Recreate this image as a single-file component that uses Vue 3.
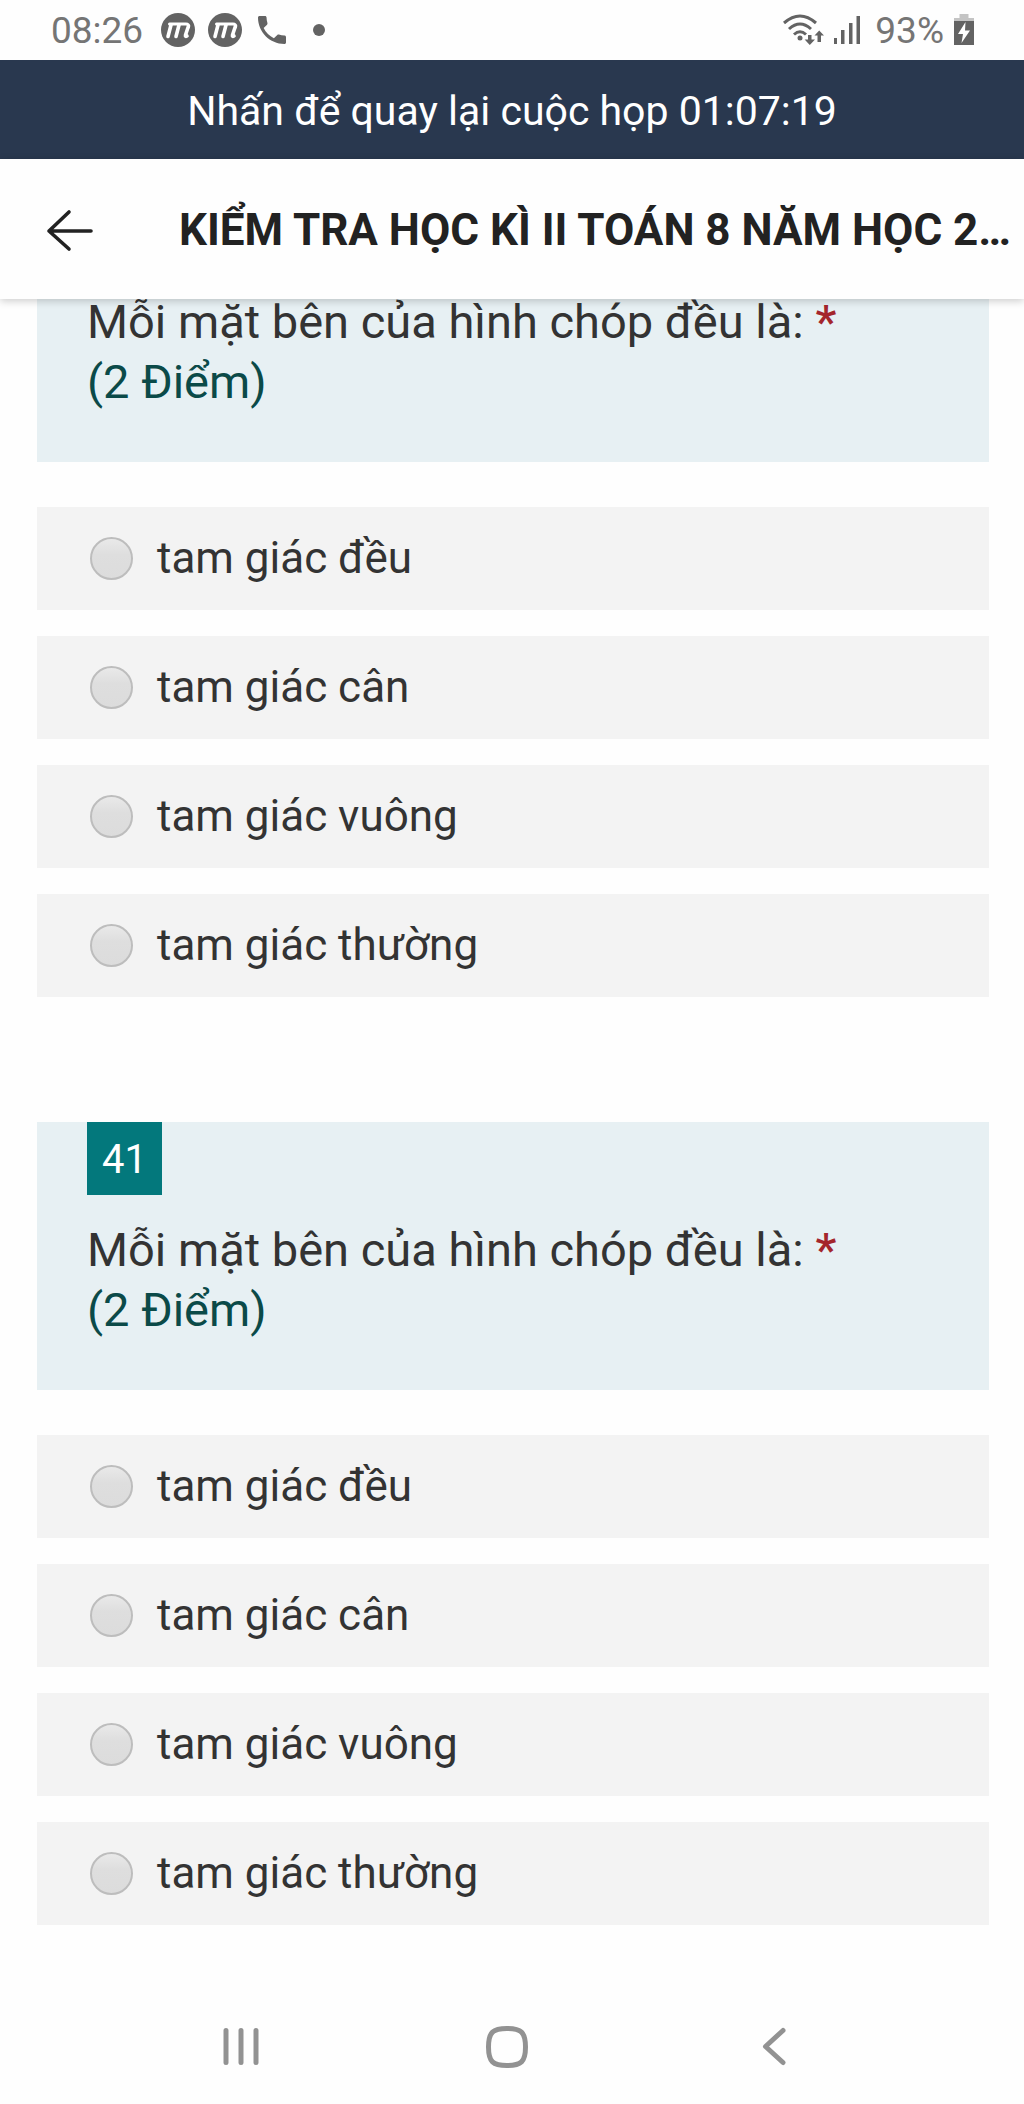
<script setup>
import { ref } from 'vue'

const choices = ['tam giác đều', 'tam giác cân', 'tam giác vuông', 'tam giác thường']
const questions = ref([
  { id: 'q40', number: '', title: 'Mỗi mặt bên của hình chóp đều là:', points: '(2 Điểm)', answer: null },
  { id: 'q41', number: '41', title: 'Mỗi mặt bên của hình chóp đều là:', points: '(2 Điểm)', answer: null },
])
</script>

<template>
  <div class="screen">
    <div class="status">
      <div class="status-side">
        <span class="status-text">08:26</span>
        <div class="notices">
          <svg v-for="n in 2" :key="n" width="36" height="36" viewBox="0 0 36 36" aria-hidden="true">
            <circle cx="18" cy="18" r="17" fill="#636363" />
            <g fill="none" stroke="#fff" stroke-linecap="round" stroke-linejoin="round">
              <path d="M9.500 12H26q3 0 2.500 3" stroke-width="3" />
              <path d="M11 13 8 24.500M19 13l-3 11.500M28.500 14l-3 9q-.5 2 1.500 1" stroke-width="3.600" />
            </g>
          </svg>
          <svg class="phone" width="28" height="28" viewBox="3 3 18 18" aria-hidden="true">
            <path fill="#636363" d="M6.620 10.790c1.440 2.830 3.760 5.140 6.590 6.590l2.200-2.200c.27-.27.67-.36 1.020-.24 1.120.37 2.330.57 3.570.57.550 0 1 .45 1 1V20c0 .55-.45 1-1 1-9.390 0-17-7.610-17-17 0-.55.45-1 1-1h3.500c.55 0 1 .45 1 1 0 1.250.2 2.450.57 3.570.11.35.03.74-.25 1.020l-2.200 2.200z" />
          </svg>
          <i class="dot"></i>
        </div>
      </div>
      <div class="status-side">
        <svg width="42" height="34" viewBox="0 0 42 34" aria-hidden="true">
          <g fill="none" stroke="#636363" stroke-width="3">
            <path d="M1 10Q17-4 33 10" />
            <path d="M6 16Q17 6 28 16" />
            <path d="M11 21.500Q17 16 23 21.500" />
          </g>
          <circle cx="17" cy="25" r="2.500" fill="#636363" />
          <path fill="#636363" d="M25 22h3.500v4.500H32L26.800 32l-5.200-5.500H25zM34.500 29h3.500v-6.500h3L36.200 17.500 31.500 22.500h3z" />
        </svg>
        <svg class="signal" width="28" height="30" viewBox="0 0 28 30" aria-hidden="true">
          <path fill="#636363" d="M1 23h3v6H1zM8 15h3.500v14H8zM16 8h3.500v21H16zM23.500 1H27v28h-3.500z" />
        </svg>
        <span class="status-text">93%</span>
        <svg class="battery" width="20" height="32" viewBox="0 0 20 32" aria-hidden="true">
          <path fill="#c4c4c4" d="M5.500 0h9v4H20v4H0V4h5.500z" />
          <path fill="#636363" d="M0 7h20v24H0z" />
          <path fill="#fff" d="M11.500 8 4 20h5l-1.500 9L16 16.500h-5z" />
        </svg>
      </div>
    </div>

    <button class="meeting" type="button">Nhấn để quay lại cuộc họp 01:07:19</button>

    <header class="appbar">
      <button class="back" type="button" aria-label="Quay lại">
        <svg width="48" height="44" viewBox="0 0 48 44" aria-hidden="true">
          <path d="M24 4 4 23l20 18M4 23h42" fill="none" stroke="#222" stroke-width="3.600" stroke-linecap="round" stroke-linejoin="round" />
        </svg>
      </button>
      <h1>KIỂM TRA HỌC KÌ II TOÁN 8 NĂM HỌC 2…</h1>
    </header>

    <main>
      <fieldset v-for="q in questions" :key="q.id" class="question">
        <legend>
          <span v-if="q.number" class="number">{{ q.number }}</span>
          <span class="title">{{ q.title }} <span class="required">*</span></span>
          <span class="points">{{ q.points }}</span>
        </legend>
        <div class="choices">
          <label v-for="(c, i) in choices" :key="c" class="choice" :for="q.id + i">
            <input :id="q.id + i" v-model="q.answer" type="radio" :name="q.id" :value="c" />
            <span>{{ c }}</span>
          </label>
        </div>
      </fieldset>
    </main>

    <nav>
      <button type="button" aria-label="Gần đây">
        <svg width="54" height="54" viewBox="0 0 54 54" aria-hidden="true"><path d="M12 10.500v32M27 10.500v32M42 10.500v32" /></svg>
      </button>
      <button type="button" aria-label="Trang chủ">
        <svg width="54" height="54" viewBox="0 0 54 54" aria-hidden="true"><path d="M27 8.500C41 8.500 45.500 12 45.500 27S41 45.500 27 45.500 8.500 42 8.500 27 13 8.500 27 8.500z" /></svg>
      </button>
      <button type="button" aria-label="Trở về">
        <svg width="54" height="54" viewBox="0 0 54 54" aria-hidden="true"><path d="M37 10.500 19.500 26.500l17.500 16" /></svg>
      </button>
    </nav>
  </div>
</template>

<style>
body {
  margin: 0;
  background: #fefefe;
}
</style>

<style scoped>
.screen {
  display: flex;
  flex-direction: column;
  min-height: 100vh;
  font-family: Roboto, "Noto Sans", sans-serif;
  color: #333;
}
button {
  padding: 0;
  border: 0;
  background: none;
  font: inherit;
  cursor: pointer;
}
svg {
  display: block;
  flex: none;
}
.status {
  display: flex;
  justify-content: space-between;
  height: 60px;
  padding: 0 50px 0 51px;
}
.status-side {
  display: flex;
  align-items: center;
}
.status-text {
  padding-top: 2px;
  font-size: 37px;
  line-height: 60px;
  color: #757575;
}
.notices {
  display: flex;
  align-items: center;
  gap: 11px;
  margin-left: 17px;
}
.phone {
  margin-left: 4px;
}
.dot {
  width: 12px;
  height: 12px;
  margin-left: 16px;
  border-radius: 50%;
  background: #636363;
}
.signal {
  margin: 0 14px 0 8px;
}
.battery {
  margin-left: 10px;
}
.meeting {
  height: 99px;
  padding-top: 3px;
  background: #29384f;
  color: #fff;
  font-size: 41px;
  line-height: 96px;
  text-align: center;
}
.appbar {
  position: relative;
  z-index: 1;
  display: flex;
  align-items: center;
  box-sizing: border-box;
  height: 140px;
  padding: 2px 0 0 45px;
  background: #fefefe;
  box-shadow: 0 2px 8px rgba(0, 0, 0, 0.2);
}
h1 {
  margin: 0 0 0 86px;
  font-size: 44px;
  line-height: 60px;
  font-weight: 700;
  color: #222;
  white-space: nowrap;
}
main {
  display: flex;
  flex-direction: column;
  gap: 125px;
  margin: -7px 35px 0 37px;
}
.question {
  min-width: 0;
  margin: 0;
  padding: 0;
  border: 0;
}
legend {
  display: flex;
  flex-direction: column;
  align-items: flex-start;
  box-sizing: border-box;
  width: 100%;
  padding: 0 50px 50px;
  background: #e7f0f3;
  font-size: 47px;
  line-height: 60px;
}
.number {
  box-sizing: border-box;
  min-width: 75px;
  margin-bottom: 25px;
  padding-top: 3px;
  background: #03787c;
  color: #fff;
  font-size: 40px;
  line-height: 70px;
  text-align: center;
}
.required {
  color: #a4262c;
  font-weight: 500;
}
.points {
  color: #0b4a48;
}
.choices {
  display: flex;
  flex-direction: column;
  gap: 26px;
  margin-top: 45px;
}
.choice {
  display: flex;
  align-items: center;
  gap: 24px;
  padding: 0 53px;
  background: #f3f3f3;
  font-size: 44px;
  line-height: 103px;
}
input {
  flex: none;
  appearance: none;
  width: 43px;
  height: 43px;
  margin: 0;
  border: 2px solid #bdbdbd;
  border-radius: 50%;
  background: linear-gradient(#e9e9e9, #dedede 40%, #dcdcdc);
}
input:checked {
  background: radial-gradient(circle, #03787c 40%, #dedede 45%);
}
nav {
  display: flex;
  justify-content: center;
  gap: 186px;
  margin-top: auto;
  padding: 0 10px 17px 0;
}
nav button {
  display: flex;
  align-items: center;
  justify-content: center;
  width: 80px;
  height: 80px;
}
nav path {
  fill: none;
  stroke: #929292;
  stroke-width: 5;
  stroke-linecap: round;
  stroke-linejoin: round;
}
</style>
